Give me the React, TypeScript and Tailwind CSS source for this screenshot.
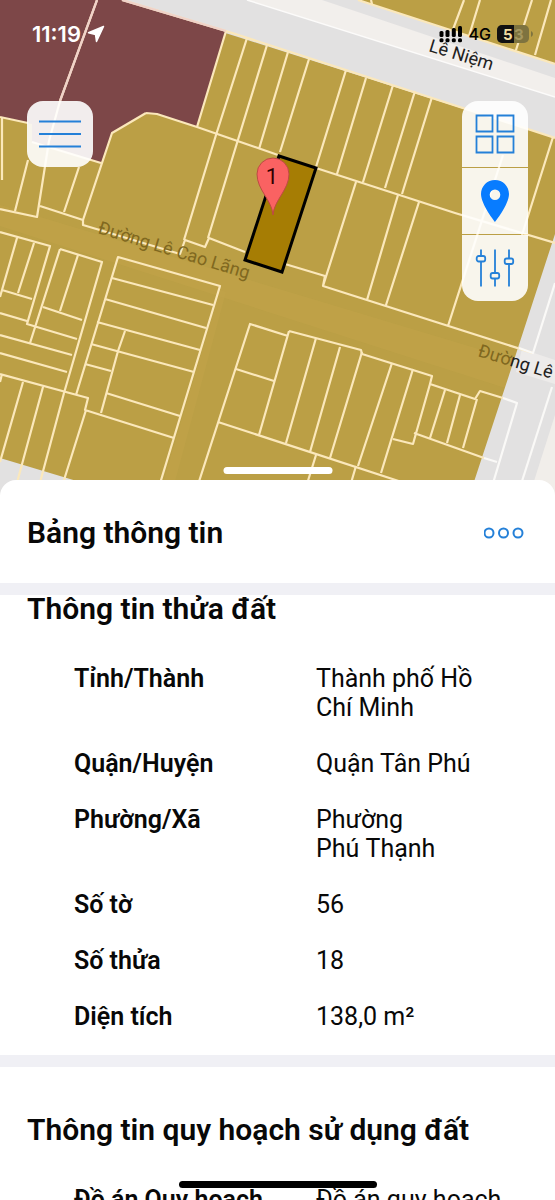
import type { ReactNode } from "react";

type Fact = { label: string; value: string };

const parcelFacts: Fact[] = [
  { label: "Tỉnh/Thành", value: "Thành phố Hồ Chí Minh" },
  { label: "Quận/Huyện", value: "Quận Tân Phú" },
  { label: "Phường/Xã", value: "Phường Phú\u00a0Thạnh" },
  { label: "Số tờ", value: "56" },
  { label: "Số thửa", value: "18" },
  { label: "Diện tích", value: "138,0 m²" },
];

const planningFacts: Fact[] = [
  { label: "Đồ án Quy hoạch", value: "Đồ án quy hoạch" },
];

// Parcel boundaries, grouped by city block.
const parcelLines = [
  // north-west block
  "M97 0 60 101 49 141 37 217 0 209M2 180V117M0 117 28 123M28 160 15 211M79 167 64 212M40 206 83 220M32 142 101 163",
  "M146 113 112 133 83 220V225L180 254 185 240 205 247 209 238 245 252M146 113 157 114 197 127 278 155",
  "M122 0 226 31 197 127M216 135 184 240M237 143 208 238M247 38 216 135M267 45 237 143M288 52 259 149M309 59 280 152",
  // north-east block
  "M226 31 555 138M346 70 316 167M366 78 337 174M393 85 363 182M415 91 385 188M432 97 402 194M316 168 455 213 555 243",
  "M356 182 323 286M398 195 367 300M419 202 386 305M503 155 448 326M553 137 522 235M285 264 325 276 323 286 533 353",
  // far side of the avenue
  "M358 0 555 64M371 0 372 4M464 0 452 32M480 0 469 36M532 0 516 50M551 0 535 55",
  // south-west block
  "M0 232 50 246 27 324 77 339M17 238 2 290 32 299M2 290 0 297M34 243 18 293M0 313 27 321M60 249 102 262 64 393M60 249 30 343",
  "M78 255 60 311M43 307 82 320M0 335 72 355M0 353 67 372M0 374 88 398 85 410 174 438M86 410 64 480 60 500M2 374 0 382M23 382 0 462M43 387 15 490M64 393 38 490",
  "M76 395 118 257 220 286 155 500M112 278 213 305M105 299 206 328M97 322 200 350M91 344 194 372M125 331 118 351 101 413M85 364 111 371M106 393 180 416",
  // south-east block
  "M193 500 250 324 288 336M236 369 274 381M218 422 420 488M289 331 259 435M289 331 361 350 362 354 432 376 430 384 475 399 480 391 503 398",
  "M316 338 286 443M340 347 310 452M362 352 330 458M392 363 358 466M413 369 381 473M430 384 413 444 393 439M414 433 484 458",
  "M445 390 430 438M460 395 447 443M477 399 463 448M316 455 302 500M356 466 346 500",
];

// Boundaries that run over the grey road surface.
const roadLines = [
  "M519 348 533 353 555 283",
  "M503 398 517 403 488 500M484 458 497 462",
  "M552 387 516 500",
];

function ParcelMap() {
  return (
    <svg
      className="absolute inset-0 h-full w-full"
      viewBox="0 0 555 500"
      preserveAspectRatio="xMidYMin slice"
      role="img"
      aria-label="Bản đồ thửa đất"
    >
      <rect width="555" height="500" fill="#bb9f45" />
      <path d="M0 205 555 372V404L0 226Z" fill="#c1a44a" opacity=".6" />
      <path d="M220 290 226 292 170 500 158 500Z" fill="#c1a44a" opacity=".6" />
      <path d="M122 0 555 138V0Z" fill="#e2e1e1" />
      <path d="M247 0H322L555 78V97Z" fill="#f2efec" />
      <path d="M247 0 555 97" stroke="#fcfbfa" strokeWidth="1.5" />
      <path d="M358 0H555V64Z" fill="#bb9f45" />
      <path d="M555 234V500H468L515 357Z" fill="#e2e1e1" />
      <path d="M522 349 555 360V384L516 372Z" fill="#edebea" />
      <path d="M555 415V500H528Z" fill="#f1eeea" />
      <path d="M0 458 140 500H0Z" fill="#e2e1e1" />
      <path
        d="M0 0H122L226 31 197 127 157 114 146 113 112 133 101 163 32 142V124L0 117Z"
        fill="#7d4748"
      />
      <g fill="none" stroke="#fbe8bb" strokeWidth="2.2" strokeLinejoin="round">
        {parcelLines.map((d) => (
          <path key={d} d={d} />
        ))}
      </g>
      <g fill="none" stroke="#faf9f7" strokeWidth="2.2" strokeLinejoin="round">
        {roadLines.map((d) => (
          <path key={d} d={d} />
        ))}
      </g>
      <path d="M97 0 60 101M122 0 226 31" stroke="#f0d2c9" strokeWidth="2.2" />
      <g fontFamily="Roboto, 'Noto Sans', sans-serif" fontSize="18">
        <text transform="translate(97 233) rotate(17)" fill="#80681f">
          Đường Lê Cao Lãng
        </text>
        <text transform="translate(477 356) rotate(17)" fill="#202020">
          <tspan fill="#80681f">Đườ</tspan>ng Lê
        </text>
        <text transform="translate(428 51) rotate(17)" fill="#222">
          Lê Niệm
        </text>
      </g>
      <path d="M279 156 316 168 282 272 245 260Z" fill="#a67d04" stroke="#000" strokeWidth="3" />
      <path
        d="M273 215C272 200 257 190 257 174a16 16 0 0 1 32 0C289 190 274 200 273 215Z"
        fill="#fa6262"
        stroke="#bd4b43"
        strokeWidth="1"
      />
      <text
        x="272"
        y="184"
        textAnchor="middle"
        fontFamily="Roboto, sans-serif"
        fontSize="22"
        fill="#300"
      >
        1
      </text>
    </svg>
  );
}

function StatusBar() {
  return (
    <div className="absolute inset-x-0 top-0 flex h-[68px] items-center justify-between pr-[22px] pl-8 font-['Inter',sans-serif]">
      <div className="flex items-center gap-1.5 text-white">
        <span className="text-[22px] font-semibold">11:19</span>
        <svg
          className="size-[18px]"
          viewBox="0 0 18 18"
          fill="currentColor"
          stroke="currentColor"
          strokeWidth="1.5"
          strokeLinejoin="round"
          aria-hidden="true"
        >
          <path d="M16.500 1.500 1.500 7.800 8.500 9.500 9.500 16.500Z" />
        </svg>
      </div>
      <div className="flex items-center gap-1.5 text-black">
        <svg className="h-[18px] w-6" viewBox="0 0 24 18" fill="currentColor" aria-hidden="true">
          <rect x="0.500" y="6" width="4" height="6" rx="1.500" />
          <rect x="6.500" y="5" width="4" height="7" rx="1.500" />
          <rect x="12.800" y="3" width="4" height="9" rx="1.500" />
          <rect x="19" y="1" width="4" height="11" rx="1.500" />
          <rect x="0.500" y="13.200" width="4" height="4" rx="1.500" />
          <rect x="6.500" y="13.200" width="4" height="4" rx="1.500" />
          <rect x="12.800" y="13.200" width="4" height="4" rx="1.500" />
          <rect x="19" y="13.200" width="4" height="4" rx="1.500" />
        </svg>
        <span className="text-base font-medium">4G</span>
        <svg className="h-[18px] w-9" viewBox="0 0 36 18" aria-label="Pin 53%">
          <rect width="32" height="18" rx="5" fill="#7e733f" />
          <path d="M5 0H17V18H5A5 5 0 0 1 0 13V5A5 5 0 0 1 5 0Z" fill="#111" />
          <path d="M34 6V12Q36 11 36 9T34 6Z" fill="#7e733f" />
          <g fontFamily="Inter, sans-serif" fontSize="15" fontWeight="700">
            <text x="6" y="14.500" fill="#f3dea0">
              5
            </text>
            <text x="17" y="14.500" fill="#a5975f">
              3
            </text>
          </g>
        </svg>
      </div>
    </div>
  );
}

function ToolButton({ label, children }: { label: string; children: ReactNode }) {
  return (
    <button
      type="button"
      aria-label={label}
      className="flex h-[66px] w-full items-center justify-center bg-white/90 text-[#2480d8]"
    >
      {children}
    </button>
  );
}

function MapTools() {
  return (
    <div className="absolute top-[101px] right-[27px] flex w-[66px] flex-col gap-px overflow-hidden rounded-2xl">
      <ToolButton label="Lớp bản đồ">
        <svg className="size-10" viewBox="0 0 40 40" fill="none" stroke="currentColor" strokeWidth="1.800">
          <path d="M1.500 1.500h16v16h-16zM22.500 1.500h16v16h-16zM1.500 22.500h16v16h-16zM22.500 22.500h16v16h-16z" />
        </svg>
      </ToolButton>
      <ToolButton label="Vị trí">
        <svg className="h-[42px] w-7" viewBox="0 0 28 42" fill="#087cff">
          <path
            fillRule="evenodd"
            d="M14 0C6.2 0 0 6.2 0 14 0 24.5 14 42 14 42S28 24.5 28 14C28 6.2 21.8 0 14 0Zm0 9.5a5.3 5.3 0 1 1 0 10.6 5.3 5.3 0 0 1 0-10.6Z"
          />
        </svg>
      </ToolButton>
      <ToolButton label="Bộ lọc">
        <svg className="size-10" viewBox="0 0 40 40" fill="none" stroke="currentColor" strokeWidth="1.800">
          <path d="M6 1.500V8M6 14V38.500M20 1.500V25M20 31V38.500M34 1.500V10.500M34 16.500V38.500" />
          <rect x="1.700" y="8" width="8.500" height="5.500" rx="2" />
          <rect x="15.700" y="25" width="8.500" height="5.500" rx="2" />
          <rect x="29.700" y="10.500" width="8.500" height="5.500" rx="2" />
        </svg>
      </ToolButton>
    </div>
  );
}

function InfoSection({ title, facts }: { title: string; facts: Fact[] }) {
  return (
    <section>
      <h2 className="px-[27px] text-[30px] leading-7 font-semibold">{title}</h2>
      <dl className="mt-[41px] flex flex-col gap-[27px] pr-[48px] pl-[74px] text-[25px] leading-[29px]">
        {facts.map(({ label, value }) => (
          <div key={label} className="grid grid-cols-[242px_minmax(0,190px)]">
            <dt className="font-semibold whitespace-nowrap">{label}</dt>
            <dd>{value}</dd>
          </div>
        ))}
      </dl>
    </section>
  );
}

export default function App() {
  return (
    <main className="relative flex h-screen flex-col overflow-hidden bg-white font-['Roboto','Noto_Sans',sans-serif] text-[#080808]">
      <div className="relative h-[500px] shrink-0 overflow-hidden">
        <ParcelMap />
        <StatusBar />
        <button
          type="button"
          aria-label="Mở menu"
          className="absolute top-[101px] left-[27px] flex size-[66px] items-center justify-center rounded-2xl bg-white/90 text-[#2480d8]"
        >
          <svg className="h-7 w-[42px]" viewBox="0 0 42 28" stroke="currentColor" strokeWidth="2">
            <path d="M0 1.500H42M0 14H42M0 26.500H42" />
          </svg>
        </button>
        <MapTools />
        <div className="absolute bottom-[26px] left-1/2 h-[7px] w-[109px] -translate-x-1/2 rounded-full bg-white" />
      </div>

      <div className="relative -mt-5 flex min-h-0 grow flex-col">
        <header className="flex h-[103px] shrink-0 items-center justify-between rounded-t-2xl bg-white px-[27px] pt-0.5">
          <h1 className="text-[30px] leading-8 font-semibold">Bảng thông tin</h1>
          <button type="button" aria-label="Thêm" className="mr-1 text-[#2480d8]">
            <svg className="h-3 w-10" viewBox="0 0 40 12" fill="none" stroke="currentColor" strokeWidth="2">
              <circle cx="5" cy="6" r="4.500" />
              <circle cx="19.500" cy="6" r="4.500" />
              <circle cx="34" cy="6" r="4.500" />
            </svg>
          </button>
        </header>
        <div className="min-h-0 grow overflow-hidden border-t-[12px] border-[#f0f0f5]">
          <InfoSection title="Thông tin thửa đất" facts={parcelFacts} />
          <div className="mt-6 mb-[49px] h-3 bg-[#f0f0f5]" />
          <InfoSection title="Thông tin quy hoạch sử dụng đất" facts={planningFacts} />
        </div>
      </div>

      <div className="absolute bottom-3 left-1/2 h-[7px] w-[198px] -translate-x-1/2 rounded-full bg-black" />
    </main>
  );
}
